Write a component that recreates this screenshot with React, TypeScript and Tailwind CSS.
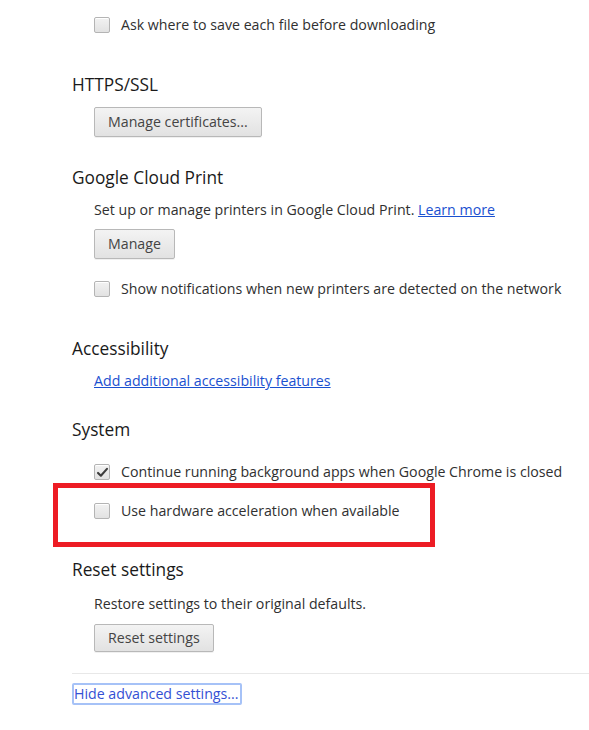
import type { ReactNode } from "react";

const font = { fontFamily: '"Open Sans", "Noto Sans", sans-serif' };

function Checkbox({ checked = false }: { checked?: boolean }) {
  return (
    <span className="relative flex h-4 w-4 shrink-0 items-center justify-center rounded-[2px] border border-[#b4b4b4] bg-gradient-to-b from-[#f2f2f2] to-[#e2e2e2] shadow-[inset_0_1px_0_#fff]">
      {checked && (
        <svg viewBox="0 0 16 16" className="h-[13px] w-[13px]">
          <path
            d="M2.5 8.5 L6 12 L13.5 3.5"
            fill="none"
            stroke="#3c3c3c"
            strokeWidth="2.6"
            strokeLinecap="round"
            strokeLinejoin="round"
          />
        </svg>
      )}
    </span>
  );
}

function CheckRow({ label, checked }: { label: string; checked?: boolean }) {
  return (
    <div className="flex h-6 items-center gap-[11px] pl-[22px]">
      <Checkbox checked={checked} />
      <span className="text-[14.2px] text-[#303030]">{label}</span>
    </div>
  );
}

function Heading({ children, className = "" }: { children: ReactNode; className?: string }) {
  return (
    <h3 className={`flex h-6 items-center text-[17.3px] font-normal text-[#1a1a1a] ${className}`}>
      {children}
    </h3>
  );
}

function Button({
  children,
  className = "",
  short = false,
}: {
  children: ReactNode;
  className?: string;
  short?: boolean;
}) {
  return (
    <button
      className={`ml-[22px] flex items-center rounded-[2px] border border-[#b8b8b8] bg-gradient-to-b from-[#f3f3f3] to-[#e2e2e2] px-[13px] text-[14.2px] text-[#444] shadow-[0_1px_0_rgba(0,0,0,0.06)] ${
        short ? "h-[28px]" : "h-[30px]"
      } ${className}`}
    >
      {children}
    </button>
  );
}

export default function App() {
  return (
    <div className="min-h-[730px] w-[589px] overflow-hidden bg-white pl-[72px]" style={font}>
      <div className="pt-[13px]">
        <CheckRow label="Ask where to save each file before downloading" />
      </div>

      <Heading className="mt-9">HTTPS/SSL</Heading>
      <Button className="mt-[10px]">Manage certificates...</Button>

      <Heading className="mt-[29px]">Google Cloud Print</Heading>
      <p className="mt-[10px] flex h-5 items-center pl-[22px] text-[14.2px] text-[#303030]">
        Set up or manage printers in Google Cloud Print.&nbsp;
        <a href="#" className="text-[#1a50d0] underline">
          Learn more
        </a>
      </p>
      <Button className="mt-[9px]">Manage</Button>
      <div className="mt-[18px]">
        <CheckRow label="Show notifications when new printers are detected on the network" />
      </div>

      <Heading className="mt-9">Accessibility</Heading>
      <div className="mt-[10px] flex h-5 items-center pl-[22px] text-[14.2px]">
        <a href="#" className="text-[#1a50d0] underline">
          Add additional accessibility features
        </a>
      </div>

      <Heading className="mt-[27px]">System</Heading>
      <div className="mt-[18px]">
        <CheckRow checked label="Continue running background apps when Google Chrome is closed" />
      </div>
      <div className="-ml-[19px] -mt-px h-16 w-[382px] border-[5px] border-[#ed1c24] pl-[14px] pt-[11px]">
        <CheckRow label="Use hardware acceleration when available" />
      </div>

      <Heading className="mt-[11px]">Reset settings</Heading>
      <p className="mt-3 flex h-5 items-center pl-[22px] text-[14.2px] text-[#303030]">
        Restore settings to their original defaults.
      </p>
      <Button short className="mt-[10px]">
        Reset settings
      </Button>

      <div className="mt-[21px] h-px bg-[#e8e8e8]" />
      <div className="mt-[9px] flex">
        <a
          href="#"
          className="flex h-[22px] items-center rounded-[2px] border-2 border-[#a6c2f7] pr-px text-[14.2px] text-[#3450d4]"
        >
          Hide advanced settings...
        </a>
      </div>
    </div>
  );
}
